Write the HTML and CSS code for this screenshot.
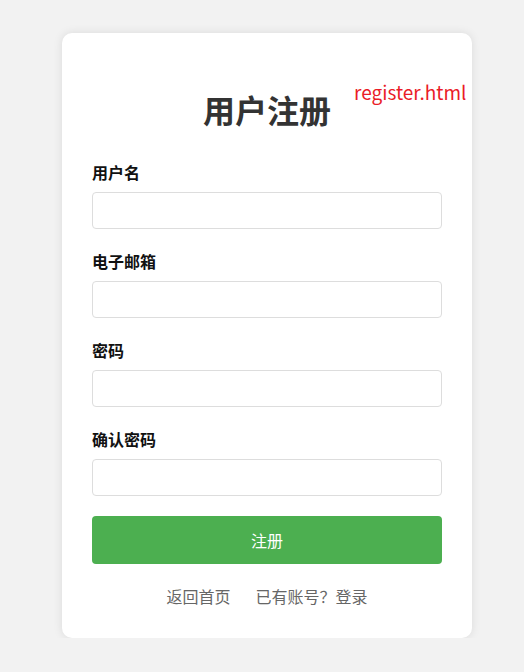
FILE: index.html
```html
<!DOCTYPE html>
<html>
<head>
    <meta charset="utf-8">
    <title>用户注册</title>
    <link rel="stylesheet" href="styles.css">
</head>
<body>
    <div class="register-container">
        <span class="file-tag">register.html</span>
        <h1>用户注册</h1>
        <form class="register-form">
            <div class="form-group">
                <label for="username">用户名</label>
                <input type="text" id="username">
            </div>
            <div class="form-group">
                <label for="email">电子邮箱</label>
                <input type="email" id="email">
            </div>
            <div class="form-group">
                <label for="password">密码</label>
                <input type="password" id="password">
            </div>
            <div class="form-group">
                <label for="confirm">确认密码</label>
                <input type="password" id="confirm">
            </div>
            <button type="button">注册</button>
        </form>
        <div class="links">
            <a href="#">返回首页</a>
            <a href="#">已有账号？登录</a>
        </div>
    </div>
</body>
</html>
```

FILE: styles.css
```css
body {
    margin: 0;
    padding: 33px 0 0 10px;
    background-color: #f2f2f2;
    font-family: "Noto Sans CJK SC", "Noto Sans", sans-serif;
}
.register-container {
    position: relative;
    width: 350px;
    margin: 0 auto;
    padding: 30px 30px 30px;
    background-color: #fff;
    border-radius: 10px;
    box-shadow: 0 0 10px rgba(0, 0, 0, 0.1);
}
.file-tag {
    position: absolute;
    left: 292px;
    top: 47px;
    font-size: 19px;
    line-height: 24px;
    color: #ea1c28;
}
h1 {
    margin: 23px 0 28px;
    font-size: 32px;
    line-height: 46px;
    text-align: center;
    color: #333;
}
.form-group {
    margin-bottom: 20px;
}
label {
    display: block;
    margin-bottom: 8px;
    font-size: 16px;
    line-height: 24px;
    font-weight: bold;
    color: #111;
}
input {
    display: block;
    width: 100%;
    height: 37px;
    box-sizing: border-box;
    padding: 8px 10px;
    border: 1px solid #ddd;
    border-radius: 4px;
    font-size: 16px;
}
button {
    display: block;
    width: 100%;
    height: 48px;
    border: none;
    border-radius: 4px;
    background-color: #4caf50;
    color: #fff;
    font-family: inherit;
    font-size: 16px;
    cursor: pointer;
}
.links {
    display: flex;
    justify-content: center;
    gap: 25px;
    margin-top: 20px;
    line-height: 24px;
}
.links a {
    color: #666;
    font-size: 16px;
    text-decoration: none;
}
```
